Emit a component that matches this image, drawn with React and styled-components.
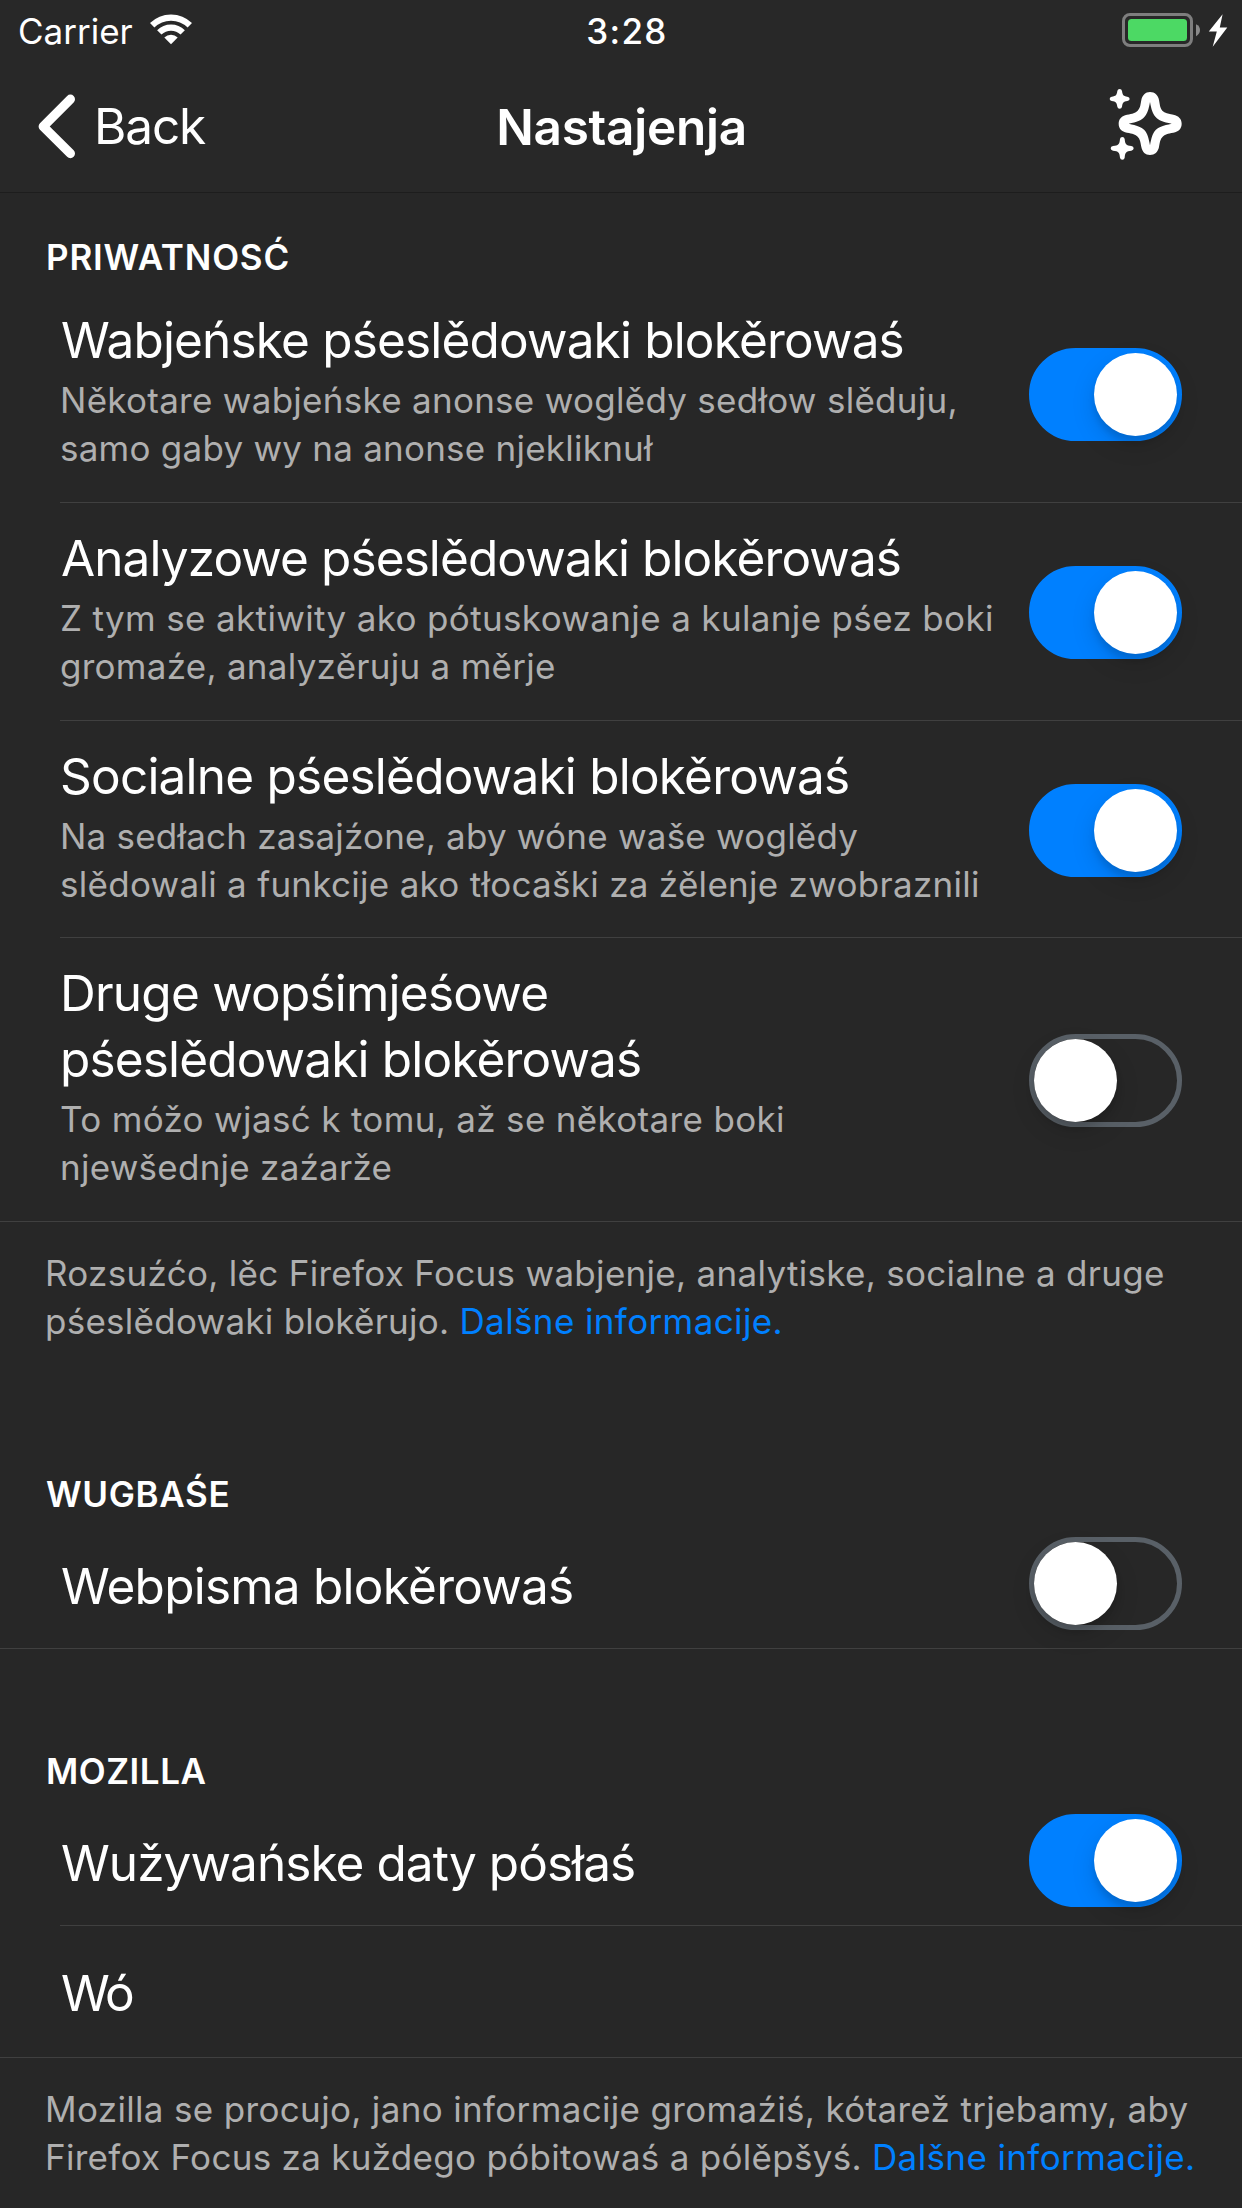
import React, { useState } from "react";
import styled, { createGlobalStyle } from "styled-components";

const GlobalStyle = createGlobalStyle`
  * { box-sizing: border-box; }
  body {
    margin: 0;
    background: #272727;
    color: #fff;
    font-family: Inter, "Liberation Sans", sans-serif;
  }
`;

const Screen = styled.main`
  width: 1242px;
  height: 2208px;
  overflow: hidden;
  background: #272727;
`;

const Header = styled.header`
  height: 193px;
  background: #282828;
  border-bottom: 1px solid #1d1d1d;
`;

const StatusBar = styled.div`
  display: grid;
  grid-template-columns: 1fr auto 1fr;
  height: 60px;
  padding: 10px 10px 8px 18px;
  line-height: 42px;
  font-size: 35px;
`;

const Carrier = styled.div`
  display: flex;
  gap: 17px;

  svg { margin-top: 4px; }
`;

const Clock = styled.div`
  margin-left: 4px;
  font-weight: 500;
  letter-spacing: 1.29px;
`;

const Power = styled.div`
  display: flex;
  justify-content: flex-end;
`;

const NavBar = styled.nav`
  display: grid;
  grid-template-columns: 1fr auto 1fr;
  height: 132px;
  padding: 0 57px 0 36px;
  font-size: 49.5px;
  line-height: 66px;
`;

const BackButton = styled.button`
  display: flex;
  justify-self: start;
  gap: 12px;
  padding: 33px 0 0;
  border: 0;
  background: none;
  color: inherit;
  font: inherit;
  letter-spacing: -1.15px;
`;

const Title = styled.h1`
  margin: 34px 0 0 22px;
  font-size: 49.5px;
  font-weight: 600;
  letter-spacing: -0.256px;
`;

const IconButton = styled.button`
  justify-self: end;
  height: 76px;
  margin-top: 26px;
  padding: 0;
  border: 0;
  background: none;
`;

const Section = styled.section`
  padding-top: ${(p) => p.$top}px;
`;

const SectionTitle = styled.h2`
  margin: 0;
  padding-left: 46px;
  height: ${(p) => p.$height}px;
  font-size: 35px;
  font-weight: 600;
  line-height: 42px;
  letter-spacing: ${(p) => p.$spacing}px;
`;

const Row = styled.div`
  display: flex;
  align-items: center;
  margin-left: ${(p) => (p.$last ? 0 : 60)}px;
  padding-left: ${(p) => (p.$last ? 60 : 0)}px;
  padding-right: 60px;
  height: ${(p) => p.$height}px;
  border-bottom: 1px solid #404040;
`;

const Copy = styled.div`
  flex: 1;
  align-self: flex-start;
  padding-top: ${(p) => p.$top}px;
  white-space: nowrap;
`;

const Label = styled.div`
  padding-left: ${(p) => p.$indent || 0}px;
  font-size: 49.5px;
  line-height: 66px;
  letter-spacing: ${(p) => p.$spacing}px;
`;

const Detail = styled.div`
  margin-top: 3px;
  color: #afafaf;
  font-size: 35px;
  line-height: 48px;
`;

const Line = styled.div`
  letter-spacing: ${(p) => p.$spacing}px;
`;

const Track = styled.button`
  display: flex;
  flex: none;
  justify-content: ${(p) => (p.$on ? "flex-end" : "flex-start")};
  width: 153px;
  height: 93px;
  margin-top: 2px;
  padding: 0;
  border: 5px solid ${(p) => (p.$on ? "#0080ff" : "#596067")};
  border-radius: 47px;
  background: ${(p) => (p.$on ? "#0080ff" : "transparent")};
`;

const Knob = styled.span`
  width: 83px;
  height: 83px;
  border-radius: 50%;
  background: #fff;
  box-shadow: 0 9px 24px rgba(0, 0, 0, 0.13), 0 6px 6px rgba(0, 0, 0, 0.1);
`;

const Footer = styled.footer`
  padding: 27px 40px 0 45px;
  color: #afafaf;
  font-size: 35px;
  line-height: 48px;
  white-space: nowrap;
`;

const Link = styled.a`
  color: #0080ff;
  letter-spacing: 0.38px;
`;

function WifiIcon() {
  return (
    <svg width="42" height="31" viewBox="0 0 42 31" fill="none">
      <path d="M2.2 11.3A26.7 26.7 0 0 1 39.8 11.3" stroke="#fff" strokeWidth="6.2" />
      <path d="M9.3 18.4A16.7 16.7 0 0 1 32.7 18.4" stroke="#fff" strokeWidth="6.2" />
      <path d="M21 30.3L14.3 23.4A10 10 0 0 1 27.7 23.4Z" fill="#fff" />
    </svg>
  );
}

function BatteryIcon() {
  return (
    <svg width="110" height="44" viewBox="0 0 110 44">
      <rect x="1.5" y="4.5" width="68" height="31" rx="6.5" fill="none" stroke="#7e7e7e" strokeWidth="3" />
      <rect x="6" y="9" width="59" height="22" rx="3.5" fill="#4cd964" />
      <path d="M74 14.2Q78 16 78 20Q78 24 74 26.2Z" fill="#8a8a8a" />
      <path d="M100.6 4.2L86.8 21.6H94.8L90.7 36.8L105.3 17.6H97.8Z" fill="#fff" />
    </svg>
  );
}

function ChevronIcon() {
  return (
    <svg width="46" height="66" viewBox="0 0 46 66" fill="none">
      <path d="M34.4 6.2L7.2 33.4L34.4 60.6" stroke="#fff" strokeWidth="9.2" strokeLinecap="round" strokeLinejoin="round" />
    </svg>
  );
}

function SparkleIcon() {
  return (
    <svg width="76" height="76" viewBox="148 258 228 228" fill="#fff">
      <path
        fillRule="evenodd"
        d="M271 276C286 276 295 286 298 300C301 318 302 325 308 332C315 339 326 341 341 344C357 347 366 357 366 371C366 385 357 395 341 398C324 401 316 403 309 410C302 417 301 425 298 441C295 456 285 465 271 465C257 465 248 456 245 441C242 425 241 417 234 410C227 403 219 401 202 398C186 395 177 385 177 371C177 357 186 347 202 344C219 341 227 339 234 332C241 325 242 318 245 300C248 286 257 276 271 276ZM271 306C267 329 263 341 254 351C245 361 232 366 207 371C232 376 245 381 254 390C263 400 267 413 271 436C275 413 279 400 288 390C297 381 310 376 336 371C310 366 297 361 288 351C279 341 275 329 271 306Z"
      />
      <path d="M180 267Q186 267 187 273C189 286 191 288 203 290Q210 291 210 297Q210 302 203 303C191 305 189 307 187 320Q186 326 180 326Q174 326 173 320C171 307 169 305 156 303Q150 302 150 297Q150 291 156 290C169 288 171 286 173 273Q174 267 180 267Z" />
      <path d="M188 411Q194 411 195 417C197 434 199 436 215 438Q222 439 222 445Q222 451 215 452C199 454 197 456 195 473Q194 479 188 479Q182 479 181 473C179 456 177 454 160 452Q153 451 153 445Q153 439 160 438C177 436 179 434 181 417Q182 411 188 411Z" />
    </svg>
  );
}

function Toggle({ initial = false, label }) {
  const [on, setOn] = useState(initial);
  return (
    <Track $on={on} role="switch" aria-checked={on} aria-label={label} onClick={() => setOn(!on)}>
      <Knob />
    </Track>
  );
}

const blockers = [
  {
    height: 218,
    on: true,
    indent: 1,
    title: [["Wabjeńske pśeslědowaki blokěrowaś", -0.824]],
    detail: [
      ["Někotare wabjeńske anonse woglědy sedłow slěduju,", 0.277],
      ["samo gaby wy na anonse njekliknuł", 0.239],
    ],
  },
  {
    height: 218,
    on: true,
    indent: 1,
    title: [["Analyzowe pśeslědowaki blokěrowaś", -0.9]],
    detail: [
      ["Z tym se aktiwity ako pótuskowanje a kulanje pśez boki", 0.351],
      ["gromaźe, analyzěruju a měrje", 0.271],
    ],
  },
  {
    height: 217,
    on: true,
    title: [["Socialne pśeslědowaki blokěrowaś", -0.776]],
    detail: [
      ["Na sedłach zasajźone, aby wóne waše woglědy", 0.22],
      ["slědowali a funkcije ako tłocaški za źělenje zwobraznili", 0.284],
    ],
  },
  {
    height: 284,
    last: true,
    title: [
      ["Druge wopśimjeśowe", -0.77],
      ["pśeslědowaki blokěrowaś", -0.843],
    ],
    detail: [
      ["To móžo wjasć k tomu, až se někotare boki", 0.331],
      ["njewšednje zaźarže", 0.251],
    ],
  },
];

export default function App() {
  return (
    <>
      <GlobalStyle />
      <Screen>
        <Header>
          <StatusBar>
            <Carrier>
              Carrier
              <WifiIcon />
            </Carrier>
            <Clock>3:28</Clock>
            <Power>
              <BatteryIcon />
            </Power>
          </StatusBar>
          <NavBar>
            <BackButton>
              <ChevronIcon />
              Back
            </BackButton>
            <Title>Nastajenja</Title>
            <IconButton aria-label="Nowe">
              <SparkleIcon />
            </IconButton>
          </NavBar>
        </Header>

        <Section $top={43}>
          <SectionTitle $height={49} $spacing={0.8}>PRIWATNOSĆ</SectionTitle>
          {blockers.map((b) => (
            <Row key={b.title[0][0]} $height={b.height} $last={b.last}>
              <Copy $top={22}>
                {b.title.map(([text, spacing]) => (
                  <Label key={text} $spacing={spacing} $indent={b.indent}>{text}</Label>
                ))}
                <Detail>
                  {b.detail.map(([text, spacing]) => (
                    <Line key={text} $spacing={spacing}>{text}</Line>
                  ))}
                </Detail>
              </Copy>
              <Toggle initial={b.on} label={b.title[0][0]} />
            </Row>
          ))}
          <Footer>
            <Line $spacing={0.305}>Rozsuźćo, lěc Firefox Focus wabjenje, analytiske, socialne a druge</Line>
            <Line $spacing={0.258}>
              pśeslědowaki blokěrujo. <Link>Dalšne informacije.</Link>
            </Line>
          </Footer>
        </Section>

        <Section $top={128}>
          <SectionTitle $height={44} $spacing={0.648}>WUGBAŚE</SectionTitle>
          <Row $height={132} $last>
            <Copy $top={36}>
              <Label $spacing={-0.763} $indent={1}>Webpisma blokěrowaś</Label>
            </Copy>
            <Toggle label="Webpisma blokěrowaś" />
          </Row>
        </Section>

        <Section $top={101}>
          <SectionTitle $height={44} $spacing={0.536}>MOZILLA</SectionTitle>
          <Row $height={132}>
            <Copy $top={36}>
              <Label $spacing={-0.934} $indent={1}>Wužywańske daty pósłaś</Label>
            </Copy>
            <Toggle initial label="Wužywańske daty pósłaś" />
          </Row>
          <Row $height={132} $last>
            <Copy $top={34}>
              <Label $spacing={-2.2} $indent={1}>Wó</Label>
            </Copy>
          </Row>
          <Footer>
            <Line $spacing={0.335}>Mozilla se procujo, jano informacije gromaźiś, kótarež trjebamy, aby</Line>
            <Line $spacing={0.29}>
              Firefox Focus za kuždego póbitowaś a pólěpšyś. <Link>Dalšne informacije.</Link>
            </Line>
          </Footer>
        </Section>
      </Screen>
    </>
  );
}
